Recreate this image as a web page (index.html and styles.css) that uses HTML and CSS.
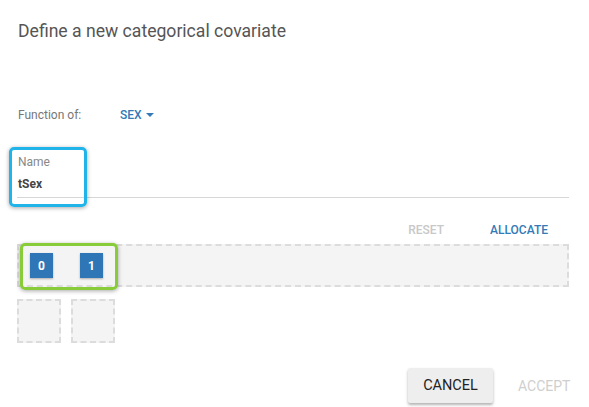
FILE: index.html
```html
<!DOCTYPE html>
<html>
<head>
<meta charset="utf-8">
<link rel="stylesheet" href="styles.css">
</head>
<body>
<div class="dialog">
  <h1 class="title">Define a new categorical covariate</h1>
  <div class="func-row">
    <span class="func-label">Function of:</span>
    <span class="func-value">SEX <svg class="caret" width="8" height="4" viewBox="0 0 8 4"><path d="M0 0 L8 0 L4 4 Z" fill="#337ab7"/></svg></span>
  </div>
  <div class="field">
    <div class="field-label">Name</div>
    <div class="field-value">tSex</div>
    <div class="hl hl-name"></div>
  </div>
  <div class="actions-top">
    <span class="btn-text disabled">RESET</span>
    <span class="btn-text primary">ALLOCATE</span>
  </div>
  <div class="zone">
    <div class="chip">0</div>
    <div class="chip">1</div>
    <div class="hl hl-chips"></div>
  </div>
  <div class="bins">
    <div class="bin"></div>
    <div class="bin"></div>
  </div>
  <div class="footer">
    <button class="btn-raised">CANCEL</button>
    <span class="btn-text accept">ACCEPT</span>
  </div>
</div>
</body>
</html>
```

FILE: styles.css
```css
html, body {
  margin: 0;
  padding: 0;
  background: #fff;
}
body {
  font-family: Roboto, "Liberation Sans", sans-serif;
  width: 589px;
  height: 407px;
  overflow: hidden;
}
.dialog {
  padding: 0 20px 0 17px;
}
.title {
  margin: 0;
  padding: 20px 0 0 1px;
  height: 23px;
  line-height: 23px;
  font-size: 17.6px;
  font-weight: 400;
  color: #555;
}
.func-row {
  margin-top: 65px;
  height: 14px;
  display: flex;
  align-items: center;
  font-size: 12px;
  padding-left: 1px;
}
.func-label {
  color: #777;
  width: 102px;
}
.func-value {
  color: #337ab7;
  font-weight: 500;
  display: flex;
  align-items: center;
  gap: 4px;
}
.caret {
  display: block;
}
.field {
  position: relative;
  margin-top: 33px;
  border-bottom: 1px solid #d6d6d6;
  height: 42px;
  padding-left: 1px;
}
.field-label {
  font-size: 12px;
  color: #888;
  height: 14px;
  line-height: 14px;
}
.field-value {
  margin-top: 8px;
  font-size: 12px;
  font-weight: 700;
  color: #444;
  height: 14px;
  line-height: 14px;
}
.hl {
  position: absolute;
  border-radius: 5px;
  box-shadow: 0 1px 4px rgba(0,0,0,0.35);
}
.hl-name {
  left: -8px;
  top: -8px;
  width: 72px;
  height: 54px;
  border: 3px solid #20b4ea;
}
.actions-top {
  display: flex;
  justify-content: flex-end;
  gap: 46px;
  margin-top: 25px;
  height: 14px;
  line-height: 14px;
  font-size: 12px;
  font-weight: 500;
  padding-right: 21px;
}
.btn-text.disabled { color: #c8c8c8; }
.btn-text.primary { color: #337ab7; }
.zone {
  position: relative;
  margin-top: 7px;
  height: 39px;
  border: 2px dashed #dcdcdc;
  background: #f4f4f4;
  display: flex;
  align-items: center;
  gap: 27px;
  padding-left: 11px;
  width: 537px;
}
.chip {
  width: 23px;
  height: 25px;
  background: #2f76b6;
  color: #fff;
  font-size: 12px;
  font-weight: 700;
  display: flex;
  align-items: center;
  justify-content: center;
  box-shadow: 0 1px 2px rgba(0,0,0,0.3);
}
.hl-chips {
  left: 1px;
  top: -3px;
  width: 92px;
  height: 41px;
  border: 3px solid #88cc3a;
}
.bins {
  display: flex;
  gap: 10px;
  margin-top: 12px;
}
.bin {
  width: 40px;
  height: 40px;
  border: 2px dashed #dcdcdc;
  background: #f4f4f4;
}
.footer {
  display: flex;
  justify-content: flex-end;
  align-items: center;
  gap: 25px;
  margin-top: 25px;
  padding-right: 0;
}
.btn-raised {
  width: 85px;
  height: 35px;
  border: none;
  border-radius: 2px;
  background: #eeeeee;
  box-shadow: 0 2px 3px rgba(0,0,0,0.3);
  font-family: Roboto, "Liberation Sans", sans-serif;
  font-size: 14.5px;
  color: #222;
  padding: 0;
}
.btn-text.accept {
  color: #cfcfcf;
  font-size: 14px;
  width: 51px;
}
```
